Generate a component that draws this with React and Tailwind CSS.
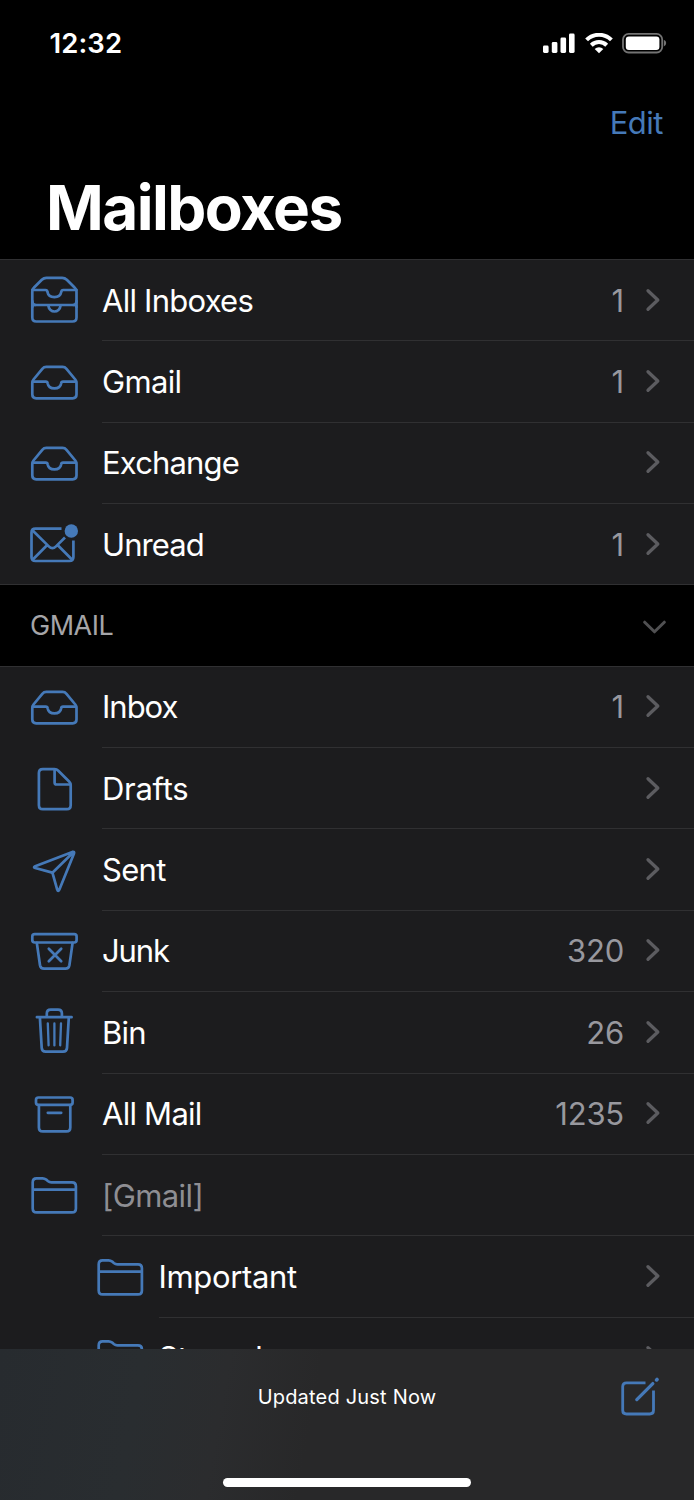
import clsx from "clsx";

const Icon = ({ children }) => (
    <svg
        className="mb-px h-12 w-12 shrink-0 text-[#4579b8]"
        viewBox="0 0 48 48"
        fill="none"
        stroke="currentColor"
        strokeWidth="2.7"
        strokeLinecap="round"
        strokeLinejoin="round"
    >
        {children}
    </svg>
);

const AllInboxesIcon = () => (
    <Icon>
        <path d="M2.3 15.5q0-2.3 1.5-3.7l8-8q2-1.9 4.6-1.9h15.8q2.6 0 4.6 1.9l8 8q1.7 1.4 1.7 3.7v26q0 4-4 4H6.3q-4 0-4-4z" />
        <path d="M2.3 14h13.2q1.7 0 1.9 1.8c1.3 7.2 12.6 7.2 13.9 0q.2-1.8 1.9-1.8h13.3" />
        <path d="M2.3 31q0-2 2.2-2h39.8q2.2 0 2.2 2M18.3 29.5c1 8 11.3 8 12.3 0" />
        <path d="M2.3 25q0 4 3.2 4M46.5 25q0 4-3.2 4" />
    </Icon>
);

const TrayIcon = () => (
    <Icon>
        <path d="M2.3 24.5q0-1.5 1.2-3l8.8-10.7q1.6-1.9 4-1.9h16.2q2.4 0 4 1.9l8.8 10.7q1.2 1.5 1.2 3v12q0 3.8-3.8 3.8H6.1q-3.8 0-3.8-3.8z" />
        <path d="M2.8 23.6h13q1.6 0 1.8 1.6c1.2 6.9 12.4 6.9 13.6 0q.2-1.6 1.8-1.6h13" />
    </Icon>
);

const UnreadIcon = () => (
    <Icon>
        <path d="M31.5 8.7H5.5q-4 0-4 4V37q0 4 4 4h33.9q4 0 4-4V20.5" strokeLinecap="butt" />
        <path d="M2.4 10.2 18.8 26.4q3.6 3.5 7.2 0l9-8.9M2.6 39.7l13.9-14M42.2 39.7 28.3 25.8" strokeLinecap="butt" />
        <circle cx="41.3" cy="11" r="6.7" fill="currentColor" stroke="none" />
    </Icon>
);

const DraftsIcon = () => (
    <Icon>
        <path d="M12.8 5.1h11.7q2.2 0 3.8 1.6l10.8 10.8q1.6 1.6 1.6 3.8v20q0 3.9-3.9 3.9h-24q-3.9 0-3.9-3.9V9q0-3.9 3.9-3.9z" />
        <path d="M24.6 5.5v13q0 2 2 2h13.6" />
    </Icon>
);

const SentIcon = () => (
    <Icon>
        <path d="M42.4 5.9 5.2 20.2q-2.3 1 0 1.8l16.2 4.4q1 .3 1.3 1.3l4.5 15.9q.9 2.6 2.1.1L44 7.5q.7-2.2-1.6-1.6zM22.4 26.8 43.4 6.2" />
    </Icon>
);

const JunkIcon = () => (
    <Icon>
        <rect x="2.3" y="7.1" width="44.3" height="8.4" rx="2.4" />
        <path d="M6.8 15.8 10 38.2q.6 3.4 4 3.4h21.4q3.4 0 4-3.4L42.6 15.8M18.8 21.8l12.4 12.5M31.2 21.8 18.8 34.3" />
    </Icon>
);

const BinIcon = () => (
    <Icon>
        <path d="M6.9 9.2h34.7M16.8 8.8V5.5q0-3.9 3.9-3.9h7.3q3.9 0 3.9 3.9v3.3M9.9 9.6l1.8 30.3q.2 3.8 4 3.8h17.3q3.8 0 4-3.8L38.8 9.6" />
        <path d="M17.8 15.4l.8 22M24.4 15.4v22M31 15.4l-.8 22" strokeWidth="2.3" />
    </Icon>
);

const ArchiveIcon = () => (
    <Icon>
        <rect x="6" y="7.5" width="36.6" height="7.4" rx="2.4" />
        <path d="M8.9 15.2v22.2q0 3.9 3.9 3.9h23.6q3.9 0 3.9-3.9V15.2M17.8 22.8h13.4" />
    </Icon>
);

const FolderIcon = () => (
    <Icon>
        <path d="M2.7 37.4V11.2q0-3.9 3.9-3.9h6q2 0 3.6 1.3l1.6 1.4q1.6 1.3 3.6 1.3h20.6q3.9 0 3.9 3.9v22.2q0 3.9-3.9 3.9H6.6q-3.9 0-3.9-3.9zM2.7 18.7h43.2" />
    </Icon>
);

const Chevron = () => (
    <svg className="mb-px h-6 w-4 shrink-0 text-[#5c5c60]" viewBox="0 0 16 24" fill="none" stroke="currentColor" strokeWidth="3.3" strokeLinecap="round" strokeLinejoin="round">
        <path d="M3 2.7 12.8 12 3 21.3" />
    </svg>
);

const ComposeIcon = () => (
    <svg className="h-10 w-10 text-[#4579b8]" viewBox="0 0 40 40" fill="none" stroke="currentColor" strokeWidth="2.8" strokeLinecap="round">
        <path d="M25.5 5.8H6.5q-3.8 0-3.8 3.8v23.6q0 3.8 3.8 3.8h23.2q3.8 0 3.8-3.8V13.5" strokeLinecap="butt" />
        <path d="M16.8 22.6 32.8 6.6" strokeWidth="3.3" />
        <path d="M36.6 2.9l.4-.4" strokeWidth="3.6" />
    </svg>
);

const favourites = [
    { name: "All Inboxes", icon: AllInboxesIcon, count: 1, spacing: "tracking-[-0.75px]" },
    { name: "Gmail", icon: TrayIcon, count: 1, spacing: "tracking-[-0.65px]" },
    { name: "Exchange", icon: TrayIcon, spacing: "tracking-[-0.85px]" },
    { name: "Unread", icon: UnreadIcon, count: 1, spacing: "tracking-[-0.9px]" },
];

const gmail = [
    { name: "Inbox", icon: TrayIcon, count: 1, spacing: "tracking-[-1px]" },
    { name: "Drafts", icon: DraftsIcon, spacing: "tracking-[-0.3px]" },
    { name: "Sent", icon: SentIcon, spacing: "tracking-[-0.7px]" },
    { name: "Junk", icon: JunkIcon, count: 320, spacing: "tracking-[-1.1px]" },
    { name: "Bin", icon: BinIcon, count: 26, spacing: "tracking-[-0.8px]" },
    { name: "All Mail", icon: ArchiveIcon, count: 1235, spacing: "tracking-[-0.75px]" },
    { name: "[Gmail]", icon: FolderIcon, disabled: true, spacing: "tracking-[-0.6px]" },
    { name: "Important", icon: FolderIcon, nested: true, spacing: "tracking-[-0.35px]" },
    { name: "Starred", icon: FolderIcon, nested: true, spacing: "tracking-[-0.6px]" },
];

const MailboxRow = ({ box, last }) => {
    const BoxIcon = box.icon;
    return (
        <div className={clsx("flex h-[81.4px] shrink-0 items-center", box.nested ? "pl-[95.5px]" : "pl-[30px]")}>
            <BoxIcon />
            <div
                className={clsx(
                    "flex h-full flex-1 items-center border-b pr-[33px]",
                    box.nested ? "ml-[15px]" : "ml-6",
                    last ? "border-transparent" : "border-[#303032]"
                )}
            >
                <span className={clsx("flex-1 pt-px text-[31px] leading-10", box.spacing, box.disabled ? "text-[#8e8e93]" : "text-white")}>
                    {box.name}
                </span>
                {box.count && <span className="mr-[21px] pt-px text-[31px] leading-10 tracking-[-0.2px] text-[#98989e]">{box.count}</span>}
                {!box.disabled && <Chevron />}
            </div>
        </div>
    );
};

const StatusBar = () => (
    <div className="flex h-[86px] items-center justify-between pr-[27px] pl-[49.5px]">
        <span className="pt-0.5 text-[27.5px] font-semibold tracking-[0.1px] text-white">12:32</span>
        <div className="flex items-center gap-[9.5px] text-white">
            <svg className="h-[21px] w-8" viewBox="0 0 32 21" fill="currentColor">
                <rect x="0" y="12.5" width="5.6" height="7.5" rx="1.4" />
                <rect x="8.8" y="9" width="5.6" height="11" rx="1.4" />
                <rect x="17.5" y="4.5" width="5.6" height="15.5" rx="1.4" />
                <rect x="26" y="0.5" width="5.6" height="19.5" rx="1.4" />
            </svg>
            <svg className="h-[21px] w-7" viewBox="0 0 28 21" fill="none" stroke="currentColor" strokeWidth="4">
                <path d="M1.6 6.9a17.6 17.6 0 0 1 24.8 0M6.3 12.2a11 11 0 0 1 15.4 0" />
                <path d="M14 20.3 9.7 16.1a6.2 6.2 0 0 1 8.6 0z" fill="currentColor" stroke="none" />
            </svg>
            <svg className="h-[21px] w-[45px]" viewBox="0 0 45 21">
                <rect x="1" y="0.9" width="39.2" height="18.6" rx="5.6" fill="none" stroke="#737373" strokeWidth="1.8" />
                <rect x="3.8" y="3.4" width="33.6" height="13.6" rx="3" fill="currentColor" />
                <path d="M41.8 6.7q2.4 1 2.4 3.4t-2.4 3.4z" fill="#737373" />
            </svg>
        </div>
    </div>
);

const App = () => {
    return (
        <div className="flex h-[1500px] w-[694px] flex-col overflow-hidden bg-black font-['Inter','Liberation_Sans',sans-serif]">
            <StatusBar />
            <div className="flex h-[74px] items-center justify-end pr-[31px]">
                <button className="text-[31px] tracking-[-0.5px] text-[#4579b8]">Edit</button>
            </div>
            <h1 className="h-[99px] pl-[46px] text-[62px] leading-[96px] font-bold tracking-[-1.55px] text-white">Mailboxes</h1>

            <div className="flex min-h-0 flex-1 flex-col overflow-hidden">
                <div className="h-[326px] shrink-0 overflow-hidden border-y border-[#303032] bg-[#1c1c1e]">
                    {favourites.map((box, i) => (
                        <MailboxRow key={box.name} box={box} last={i === favourites.length - 1} />
                    ))}
                </div>
                <div className="flex h-[80.6px] shrink-0 items-center justify-between pr-[28px] pl-[30px]">
                    <span className="pt-0.5 text-[27px] tracking-[-0.5px] text-[#a5a5a8]">GMAIL</span>
                    <svg className="mt-1 h-4 w-6 text-[#505052]" viewBox="0 0 24 16" fill="none" stroke="currentColor" strokeWidth="3" strokeLinecap="round" strokeLinejoin="round">
                        <path d="M2.7 3.2 12.5 12.8l9.8-9.6" />
                    </svg>
                </div>
                <div className="shrink-0 border-t border-[#303032] bg-[#1c1c1e]">
                    {gmail.map((box) => (
                        <MailboxRow key={box.name} box={box} />
                    ))}
                </div>
            </div>

            {/* Toolbar */}
            <div className="flex h-[151px] shrink-0 flex-col justify-between bg-[#28282a] bg-[linear-gradient(100deg,#272b2f_0%,#292d30_20%,#2b2c2e_32%,#282829_45%,#282829_100%)] pb-[13px]">
                <div className="grid h-24 grid-cols-[1fr_auto_1fr] items-center pr-[34px] pl-[34px]">
                    <span />
                    <span className="text-[20px] tracking-[0.2px] text-white">Updated Just Now</span>
                    <div className="flex justify-end">
                        <ComposeIcon />
                    </div>
                </div>
                <div className="mx-auto h-[9px] w-[248px] rounded-full bg-white" />
            </div>
        </div>
    );
};

export default App;
